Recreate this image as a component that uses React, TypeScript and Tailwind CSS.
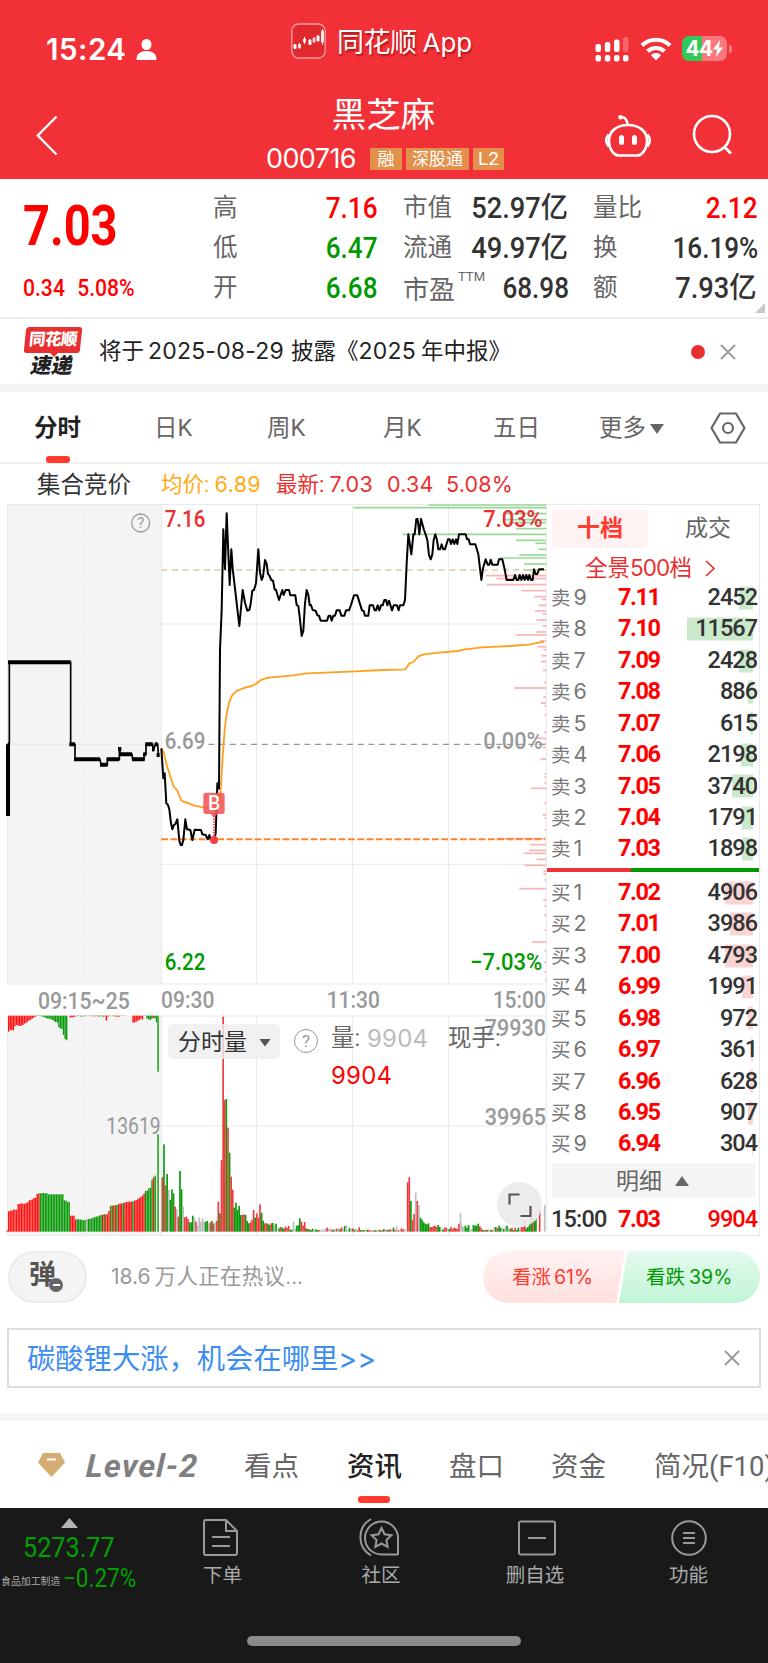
import { type FC, type ReactNode } from "react";

type Level = { label: string; price: string; volume: string; bar: number };

const sellLevels: Level[] = [
  { label: "9", price: "7.11", volume: "2452", bar: 14 },
  { label: "8", price: "7.10", volume: "11567", bar: 66 },
  { label: "7", price: "7.09", volume: "2428", bar: 14 },
  { label: "6", price: "7.08", volume: "886", bar: 5.5 },
  { label: "5", price: "7.07", volume: "615", bar: 3.5 },
  { label: "4", price: "7.06", volume: "2198", bar: 12.5 },
  { label: "3", price: "7.05", volume: "3740", bar: 21 },
  { label: "2", price: "7.04", volume: "1791", bar: 11 },
  { label: "1", price: "7.03", volume: "1898", bar: 11 },
];

const buyLevels: Level[] = [
  { label: "1", price: "7.02", volume: "4906", bar: 28 },
  { label: "2", price: "7.01", volume: "3986", bar: 23 },
  { label: "3", price: "7.00", volume: "4793", bar: 28 },
  { label: "4", price: "6.99", volume: "1991", bar: 11 },
  { label: "5", price: "6.98", volume: "972", bar: 5.5 },
  { label: "6", price: "6.97", volume: "361", bar: 2 },
  { label: "7", price: "6.96", volume: "628", bar: 3.5 },
  { label: "8", price: "6.95", volume: "907", bar: 5.5 },
  { label: "9", price: "6.94", volume: "304", bar: 1.5 },
];

// The chart is drawn in units of a third of a pixel.
const auctionLine =
  "24,948 24,733 28,733 28,487 212,487 212,733 225,733 225,778 300,778 303,794 322,794 322,778 358,778 358,747 362,763 396,763 398,778 432,778 432,763 438,763 438,733 458,733 460,748 467,733 473,733 475,763";

const priceLine =
  "484,745 490,835 494,820 499,910 504,915 508,928 513,970 517,988 521,976 526,972 532,958 538,1022 542,1035 546,1035 550,1020 556,958 561,988 571,990 577,1020 584,989 603,990 607,1003 617,1005 623,1018 628,1005 632,1018 643,1018 647,1000 652,850 657,866 660,450 665,330 670,88 675,208 680,40 689,255 694,148 698,205 718,378 728,270 735,308 742,332 748,330 752,312 757,272 762,270 768,250 775,148 780,218 785,240 789,230 795,180 800,192 804,222 808,226 814,240 819,242 824,268 828,270 837,300 847,270 851,285 857,270 867,270 871,286 886,286 890,315 895,318 899,350 905,408 910,392 915,310 920,270 925,285 929,315 933,315 938,330 947,332 952,346 957,347 962,362 981,362 986,347 991,347 995,362 1000,347 1005,347 1010,331 1019,331 1024,347 1033,347 1038,331 1047,331 1052,318 1062,286 1072,286 1086,331 1091,333 1095,347 1105,347 1109,316 1119,316 1124,331 1128,331 1133,316 1138,331 1143,316 1148,316 1153,300 1158,300 1162,316 1167,302 1176,331 1181,316 1191,316 1196,331 1200,316 1210,316 1215,300 1220,190 1225,103 1234,163 1240,103 1244,103 1249,57 1253,57 1258,103 1263,57 1272,90 1277,104 1282,120 1287,165 1292,178 1297,163 1301,120 1306,103 1311,120 1315,148 1320,148 1325,133 1330,148 1335,148 1344,118 1349,118 1353,132 1358,118 1363,132 1368,118 1372,132 1377,103 1397,103 1401,118 1406,118 1410,133 1426,133 1435,163 1440,205 1444,240 1449,205 1457,178 1463,194 1468,194 1472,179 1477,194 1493,194 1497,178 1507,178 1514,208 1520,240 1540,240 1545,225 1550,240 1555,240 1559,225 1564,240 1569,225 1574,240 1579,225 1584,240 1588,225 1593,240 1598,240 1602,208 1607,222 1612,222 1617,208 1632,208";

const averageLine =
  "485,745 492,760 500,795 510,825 520,858 532,872 543,900 552,906 565,909 580,916 600,920 620,924 650,924 658,905 663,860 668,770 674,690 680,640 688,605 697,585 712,572 735,563 755,558 768,552 780,541 800,534 815,532 880,526 920,520 1050,515 1150,510 1215,508 1220,503 1228,490 1240,486 1255,469 1272,463 1315,458 1375,453 1390,449 1445,442 1530,438 1585,434 1605,430 1632,425";

// [y, left edge] of each volume-at-price line, all of them end at x = 1638
const askDepth = [
  [15, 1285], [23, 1060], [41, 1509], [59, 1509], [68, 1525], [86, 1548], [103, 1208],
  [121, 1548], [130, 1606], [148, 1616], [165, 1558], [174, 1500], [192, 1572], [210, 1570],
];

const bidDepth = [
  [227, 1457], [236, 1490], [254, 1461], [272, 1564], [290, 1603], [298, 1625], [316, 1616],
  [333, 1605], [342, 1628], [360, 1609], [378, 1627], [396, 1609], [405, 1547], [423, 1620],
  [440, 1612], [449, 1630], [467, 1624], [485, 1623], [511, 1628], [547, 1633], [564, 1543],
  [591, 1630], [609, 1622], [617, 1633], [645, 1633], [697, 1632], [715, 1608], [733, 1624],
  [742, 1628], [777, 1621], [822, 1633], [831, 1633], [848, 1633], [865, 1592], [910, 1633],
  [945, 1628], [955, 1633], [990, 1633], [1016, 1488], [1034, 1590], [1051, 1588], [1060, 1573],
  [1078, 1610], [1096, 1573], [1114, 1630], [1122, 1630], [1140, 1633], [1166, 1558],
  [1200, 1630], [1218, 1632], [1246, 1632], [1290, 1633], [1326, 1596], [1352, 1633],
  [1387, 1632], [1415, 1633], [1440, 1635],
];

const barColors: Record<string, string> = { r: "#f03a3e", R: "#ff1414", g: "#0a9a0a", n: "#bdbdbd" };

type BarRun = [x: number, bars: string];

// Each token is a colour letter followed by the height of the bar.
const auctionTop: BarRun[] = [
  [26, "R48 R42 R44 R44 R32 R28 R30 R31 R30 R28 R24 R22 R18 R15 R12 R9 R5 R3 g1 g1 R1 g2 g3 g5 g7 g9 g9 g11 g13 g16 g19 g20 g35 g38 g40 g58 g70 g74"],
  [211, "R6 R5 R4 R3 n1 g1 g1 g3 n1 g2 g1 n1 g1 n1 R2 n1 g2 g1 R3 g1 g2 R3 R2 R15 R3 g1 n1 g1 R2 R2 R3 R3 n1 g1 n1 n1"],
  [399, "R21 R20 R18 R15 R13 R9 R12 n1 g1 g9 g11 g13 g9 R7 g8 g20"],
  [474, "g168"],
];

const auctionBottom: BarRun[] = [
  [21, "R4 R61 R63 R63 R66 R66 R66 R83 R83 R85 R84 R84 R86 R88 R94 R95 R97 R101 R102 R113 R115 g115 g116 g116 g115 g115 g112 g112 g112 g112 g112 g112 g112 g112 g112 g112 g94 g93 g89 g89 R48 R48 R48 R37 g37 g37 g36 g36 g34 g35 n37 g38 g38 g40 g42 g43 g45 g46 g48 g50 R51 g52 R52 R52 R62 g78 R78 g79 R79 g80 R83 R84 R85 g86 R88 R89 R90 R90 R90 g91 R93 R95 R97 R101 R104 R108 R115 g122 g123 g130 g132 g156 R163 g168"],
  [474, "g292"],
];

const volumeBars: BarRun[] = [
  [487, "r163 g262 r139 g173 n125 g95 g127 g115 r75 n68 r45 g182 g127 n75 r43 r45 r38 g28 g28 g48 n42 r30 n18 n42 n28 n40 n30 g30 g32 n25 r28 g32 r24 n28 r32"],
  [655, "r90 g55 r215 r645 r395 g398 r312 g237 r165 r126 g72 g87 g65 g77 g50 r50 r52 g50 g32 g25 r28 r35 r65 g42 r55 r42 r82 g57 g33 r25 r25 g24 g20 r25 g26 n20 g24"],
  [837, "g10 r14 g12 g9 r15 r11 r17 g6 g6 n30 n8 g18 g19 g40 r30 r18 r29 g10 r8 g7 g5 g9 n5 g7 g5 r5 n4 n8 n4 n10 r12 n9 n10 r6 g6 n8 r9 n11 g7 r13 n9 g17 n20 n5 g12 n8 r10 g6 n8 g4 r13 g5 r4 g5 n4 g6 r5 r4"],
  [1118, "r4 g3 g5 n4 r6 g4 r4 g8 n5 r5 g6 r7 n7 g12 r5 n16 r4 n6 r10 r7 n8"],
  [1223, "r148 r163 g92 r35 r53 n117 r92 n80 g42 g36 g28 g24 g22 g25 r14 r14 r16 r18 r14 g20 g14 n8 g6 r12 r12 n10 g8 r14 r8 r12 r10 r8 r24 n55 n18 n14 g18 g12 g20 n8 n6 g20 g18 g18 g24 r16 r10 g5 r4 g5 r6 n4 g6 r4 n14 g14 r10 g18 g12 n10 g8 n16 g18 n12 g8 r12 g5 r12 g5 g12 n10 r14 r14 r35 g10 g14 g22 g42 r42 g35 g40"],
  [1619, "r67"],
  [1634, "n80"],
];

const toBars = (runs: BarRun[], step: number) =>
  runs.flatMap(([start, bars]) =>
    bars.split(" ").map((token, index) => ({
      x: start + index * step,
      height: Number(token.slice(1)),
      fill: barColors[token[0]],
    })),
  );

type ChartLabelProps = {
  x: number;
  y: number;
  width: number;
  color: string;
  weight?: number;
  children: string;
};

const ChartLabel: FC<ChartLabelProps> = ({ x, y, width, color, weight = 500, children }) => (
  <text
    x={x}
    y={y}
    fill={color}
    fontSize="69"
    fontWeight={weight}
    lengthAdjust="spacingAndGlyphs"
    textLength={width}
  >
    {children}
  </text>
);

const Close: FC<{ className: string }> = ({ className }) => (
  <svg className={className} viewBox="0 0 16 16" fill="none" stroke="#999" strokeWidth="1.8">
    <path d="M1 1l14 14M15 1L1 15" />
  </svg>
);

const StatusBar: FC = () => (
  <div className="grid h-[86px] grid-cols-[291px_304px_1fr]">
    <div className="flex items-start pt-[35px] pl-[46px]">
      <span className="w-[81px] font-[Inter] text-[29.500px] leading-[29px] font-semibold tracking-[0.500px]">15:24</span>
      <svg className="mt-[4px] ml-[9px] h-[21px] w-[21px]" viewBox="0 0 21 21" fill="#fff">
        <ellipse cx="10.5" cy="5.5" rx="5" ry="5.5" />
        <path d="M0.5 20c0-5 4-8 10-8s10 3 10 8q0 1-1 1h-18q-1 0-1-1z" />
      </svg>
    </div>
    <div className="flex items-start pt-[23px]">
      <svg className="h-9 w-[35px]" viewBox="0 0 35 36" fill="none" stroke="#fff">
        <rect x="0.8" y="1" width="33.4" height="34" rx="7" fill="#e02a30" stroke="#f79a9d" strokeWidth="1.4" />
        <path d="M3 21.500h2v4h-2zM18 17h2v4.500h-2zM26 13h2v5h-2z" fill="#fff" />
        <path d="M8.500 20v6M7.500 21.500h2v3h-2zM13.500 14v7M12.500 16h2v3h-2zM19 16v6M23 14v6M22 15.500h2v3h-2zM27 12v6M31.500 6v16M30.500 8h2v11h-2z" strokeWidth="0.9" />
      </svg>
      <span className="ml-[11px] pt-[5px] text-[27px] leading-[30px] tracking-[-0.500px] [text-shadow:1px_2px_2px_rgba(120,0,0,0.6)]">
        同花顺<span className="ml-[6px] font-[Inter] text-[26px] tracking-normal">App</span>
      </span>
    </div>
    <div className="flex items-start">
      <svg className="mt-[37px] h-[25px] w-[34px]" viewBox="0 0 34 25" fill="#fff">
        <rect x="0.500" y="7" width="5.500" height="8" rx="2" />
        <rect x="9.800" y="5" width="5.500" height="10" rx="2" />
        <rect x="19" y="2.500" width="5.500" height="12.500" rx="2" />
        <rect x="28" y="0" width="5.500" height="15" rx="2" opacity="0.25" />
        <rect x="0.500" y="18" width="5.500" height="6.500" rx="2" />
        <rect x="9.800" y="18" width="5.500" height="6.500" rx="2" />
        <rect x="19" y="18" width="5.500" height="6.500" rx="2" />
        <rect x="28" y="18" width="5.500" height="6.500" rx="2" />
      </svg>
      <svg className="mt-[36px] ml-[11px] h-[25px] w-[32px]" viewBox="0 0 32 25" fill="none" stroke="#fff" strokeWidth="4">
        <path d="M2 9.500a20 20 0 0 1 28 0" />
        <path d="M7.500 15.300a12.300 12.300 0 0 1 17 0" />
        <path d="M10.800 19a7.500 7.500 0 0 1 10.400 0L16 24.500z" fill="#fff" stroke="none" />
      </svg>
      <div className="mt-[36px] ml-[10px] flex h-[25px] w-[45px] items-center justify-center rounded-[7px] bg-[linear-gradient(90deg,#34c759_44%,#f8797d_44%)] font-[Inter] text-[21px] leading-none font-bold tracking-[-0.8px]">
        44
        <svg className="ml-px h-[17px] w-[10px]" viewBox="0 0 10 17" fill="#fff">
          <path d="M7 0L0 9.500h4L3 17l7-9.500H6z" />
        </svg>
      </div>
      <div className="mt-[45px] ml-[2px] h-[8px] w-[2.500px] rounded-r-full bg-[#f8797d]" />
    </div>
  </div>
);

const TitleBar: FC = () => (
  <div className="grid h-[93px] grid-cols-[267px_240px_1fr]">
    <svg className="mt-[29px] ml-[36px] h-[41px] w-[22px]" viewBox="0 0 22 41" fill="none" stroke="#fff" strokeWidth="2.400">
      <path d="M20.500 1.500L1.800 20.500l18.700 19" />
    </svg>
    <div className="flex flex-col">
      <h1 className="mt-[11px] w-[233px] text-center text-[34.500px] leading-[36px]">黑芝麻</h1>
      <div className="mt-[13px] flex h-[26px] items-center">
        <span className="-ml-px w-[104px] pb-[2px] font-[Inter] text-[27px] leading-none tracking-[-0.600px]">000716</span>
        <div className="flex gap-[4px] text-[17px] leading-[22px]">
          <span className="w-[32px] bg-[#e2904a] text-center">融</span>
          <span className="w-[63px] bg-[#e2904a] text-center">深股通</span>
          <span className="w-[31px] bg-[#e2904a] text-center text-[19px]">L2</span>
        </div>
      </div>
    </div>
    <div className="flex">
      <svg className="mt-[28px] ml-[98px] h-[43px] w-[46px]" viewBox="0 0 46 43" fill="none" stroke="#fff" strokeWidth="2.600">
        <path d="M15.500 3.500c4-1 7 2 7 7.500" />
        <circle cx="15.500" cy="3.200" r="2.300" fill="#fff" stroke="none" />
        <path d="M23 11c11.500 0 19 6.500 19 15.500S37 41.500 32 41.500H14C9 41.500 4 35.500 4 26.500S11.500 11 23 11z" />
        <path d="M3.500 20.500q-4.500 5.500 0 12M42.500 20.500q4.500 5.500 0 12" />
        <path d="M16.500 23.500v5M29.500 23.500v5" strokeWidth="5" strokeLinecap="round" />
      </svg>
      <svg className="mt-[28px] ml-[41px] h-[42px] w-[42px]" viewBox="0 0 42 42" fill="none" stroke="#fff" strokeWidth="2.600">
        <circle cx="20" cy="20" r="18" />
        <path d="M32 32.500l7 7" strokeWidth="3" />
      </svg>
    </div>
  </div>
);

const Figure: FC<{ className?: string; children: ReactNode }> = ({ className = "text-[#333]", children }) => (
  <span className={`-mr-px ml-auto origin-right scale-x-90 text-[29px] leading-none font-medium ${className}`}>
    {children}
  </span>
);

const QuoteSummary: FC = () => (
  <section className="flex h-[140px] shrink-0 border-b-2 border-[#eeeeee]">
    <div className="w-[213px] pl-[23px] text-[#ff0000]">
      <div className="mt-[19px] h-[56px] origin-left scale-x-84 text-[56px] leading-[56px] font-bold">7.03</div>
      <div className="mt-[22px] flex origin-left scale-x-88 text-[24px] leading-[24px] font-medium">
        <span>0.34</span>
        <span className="ml-[14px]">5.08%</span>
      </div>
    </div>
    <div className="flex w-[164px] flex-col pt-[10px] text-[24.500px] text-[#666]">
      <div className="flex h-[39.700px] items-center">
        <span>高</span>
        <Figure className="text-[#ff0000]">7.16</Figure>
      </div>
      <div className="flex h-[39.700px] items-center">
        <span>低</span>
        <Figure className="text-[#009900]">6.47</Figure>
      </div>
      <div className="flex h-[39.700px] items-center">
        <span>开</span>
        <Figure className="text-[#009900]">6.68</Figure>
      </div>
    </div>
    <div className="ml-[26px] flex w-[165px] flex-col pt-[10px] text-[24.500px] text-[#666]">
      <div className="flex h-[39.700px] items-center">
        <span>市值</span>
        <span className="ml-auto origin-right scale-x-94 text-[29px] leading-none font-medium text-[#333]">52.97亿</span>
      </div>
      <div className="flex h-[39.700px] items-center">
        <span>流通</span>
        <span className="ml-auto origin-right scale-x-94 text-[29px] leading-none font-medium text-[#333]">49.97亿</span>
      </div>
      <div className="flex h-[39.700px] items-center">
        <span className="pt-[4px] text-[26px]">市盈</span>
        <span className="ml-[3px] self-start text-[13px] leading-[18px]">TTM</span>
        <Figure>68.98</Figure>
      </div>
    </div>
    <div className="ml-[25px] flex w-[164px] flex-col pt-[10px] text-[24.500px] text-[#666]">
      <div className="flex h-[39.700px] items-center">
        <span>量比</span>
        <Figure className="text-[#ff0000]">2.12</Figure>
      </div>
      <div className="flex h-[39.700px] items-center">
        <span>换</span>
        <Figure>16.19%</Figure>
      </div>
      <div className="flex h-[39.700px] items-center">
        <span>额</span>
        <span className="ml-auto origin-right scale-x-94 text-[29px] leading-none font-medium text-[#333]">7.93亿</span>
      </div>
    </div>
    <div className="mb-[4px] -ml-[2px] h-[10px] w-[10px] self-end bg-[#c8c8c8] [clip-path:polygon(100%_0,100%_100%,0_100%)]" />
  </section>
);

const NewsRow: FC = () => (
  <section className="flex h-[65px] shrink-0 items-center">
    <div className="ml-[25px] flex h-[49px] w-[58px] flex-col">
      <div className="h-[26px] w-[56px] -skew-x-6 rounded-[3px] bg-[#e93030] text-center text-[16.500px] leading-[25px] font-black tracking-[-0.5px] text-white">
        同花顺
      </div>
      <div className="h-[4px] w-[8px] self-center bg-[#e93030] [clip-path:polygon(0_0,100%_0,50%_100%)]" />
      <div className="ml-[6px] -skew-x-12 text-[21px] leading-[19px] font-black text-[#222]">速递</div>
    </div>
    <div className="ml-[16px] flex items-center text-[22.500px] leading-none text-[#222]">
      <span>将于</span>
      <span className="ml-[4px] w-[140px] font-[Inter] text-[23px] tracking-[0.200px]">2025-08-29</span>
      <span className="ml-[3px]">披露《</span>
      <span className="font-[Inter] text-[23px] tracking-[0.200px]">2025</span>
      <span className="ml-[5px]">年中报》</span>
    </div>
    <div className="ml-auto h-[14px] w-[14px] rounded-full bg-[#e93030]" />
    <Close className="mr-[32px] ml-[15px] h-4 w-4" />
  </section>
);

const ChartTabs: FC = () => (
  <nav className="flex h-[72px] shrink-0 items-center border-b-2 border-[#f0f0f0] pt-[4px] text-[23.500px] leading-none text-[#666]">
    <div className="relative ml-[34px] w-[120px] font-bold text-[#222]">
      分时
      <span className="absolute top-[39px] left-[12px] h-[7px] w-[24px] rounded-[3px] bg-[#ff3b30]" />
    </div>
    <span className="w-[113px]">日K</span>
    <span className="w-[116px]">周K</span>
    <span className="w-[110px]">月K</span>
    <span className="w-[106px]">五日</span>
    <span>更多</span>
    <span className="ml-[4px] h-[10px] w-[14px] bg-[#666] [clip-path:polygon(0_0,100%_0,50%_100%)]" />
    <svg className="mb-[2px] ml-[46px] h-[32px] w-[36px]" viewBox="0 0 36 32" fill="none" stroke="#666" strokeWidth="2.200">
      <path d="M10 1.500h16L34.500 16 26 30.500H10L1.500 16z" strokeLinejoin="round" />
      <circle cx="18" cy="16" r="5" />
    </svg>
  </nav>
);

const ChartLegend: FC = () => (
  <div className="flex h-[40px] shrink-0 items-center pt-px text-[21.500px] leading-none text-[#e93030]">
    <span className="ml-[37px] w-[124px] pt-[3px] text-[23.500px] text-[#333]">集合竞价</span>
    <span className="w-[115px] text-[#ffaa10]">
      均价: <span className="font-[Inter] text-[21.500px] tracking-[0.400px]">6.89</span>
    </span>
    <span className="w-[111px]">
      最新: <span className="font-[Inter] text-[21.500px] tracking-[0.400px]">7.03</span>
    </span>
    <span className="w-[59px] font-[Inter] text-[21.500px] tracking-[0.200px]">0.34</span>
    <span className="font-[Inter] text-[21.500px] tracking-[0.200px]">5.08%</span>
  </div>
);

const Chart: FC = () => (
  <div className="relative h-[736px] w-[547px] shrink-0">
    <svg className="block h-[736px] w-[547px]" viewBox="0 12 1641 2208" fontFamily="Roboto">
      <rect x="22" y="12" width="461" height="1440" fill="#f4f4f4" />
      <rect x="22" y="1548" width="461" height="658" fill="#f4f4f4" />
      <g stroke="#e9e9e9" strokeWidth="3" fill="none">
        <path d="M22 13.500H1641M22 1452H1641M484 372H1639M484 1093H1639M22 733H484" />
        <path d="M22 13V1452M484 13V1452M770 13V1452M1058 13V1452M1346 13V1452M1639 13V2208" />
        <path d="M22 1548H1639M22 2206H1641M484 1878H1639" />
        <path d="M22 1548V2206M484 1548V2206M770 1548V2206M1058 1548V2206M1346 1548V2206" />
        <path d="M22 373H484M22 1093H484M255 13V1452M255 1548V2206M22 1878H484" strokeDasharray="4 6" />
      </g>

      <g stroke="#98d898" strokeWidth="5">
        {askDepth.map(([y, x]) => (
          <path key={y} d={`M${x} ${y}H1638`} />
        ))}
      </g>
      <g stroke="#f9b4b4" strokeWidth="5">
        {bidDepth.map(([y, x]) => (
          <path key={y} d={`M${x} ${y}H1638`} />
        ))}
      </g>

      <ChartLabel x={494} y={81} width={122} color="#e93030">7.16</ChartLabel>
      <ChartLabel x={1450} y={81} width={178} color="#e93030">7.03%</ChartLabel>
      <ChartLabel x={494} y={746} width={122} color="#999">6.69</ChartLabel>
      <ChartLabel x={1450} y={746} width={178} color="#999">0.00%</ChartLabel>
      <ChartLabel x={494} y={1410} width={122} color="#009900">6.22</ChartLabel>
      <ChartLabel x={1410} y={1410} width={217} color="#009900">−7.03%</ChartLabel>
      <ChartLabel x={114} y={1527} width={275} color="#999">09:15~25</ChartLabel>
      <ChartLabel x={483} y={1523} width={160} color="#999">09:30</ChartLabel>
      <ChartLabel x={980} y={1523} width={160} color="#999">11:30</ChartLabel>
      <ChartLabel x={1478} y={1523} width={160} color="#999">15:00</ChartLabel>

      <path d="M484 210H1638" stroke="#e2c79e" strokeWidth="4" strokeDasharray="18 14" />
      <path d="M625 733H1638" stroke="#999" strokeWidth="4" strokeDasharray="18 14" />
      <path d="M484 1018H1635" stroke="#ff8526" strokeWidth="6" strokeDasharray="20 8" />
      <polyline points={auctionLine} fill="none" stroke="#000" strokeWidth="5" />
      <path
        d="M24 487H212M24 733H28M24 948V733M208 733H225M222 778H300M300 794H323M320 778H358M354 747H364M358 763H396M396 778H434M430 763H438M436 733H458M456 748H464M464 733H473M470 765H479"
        stroke="#000"
        strokeWidth="12"
        strokeLinecap="butt"
        fill="none"
      />
      <polyline points={averageLine} fill="none" stroke="#ffa01e" strokeWidth="5.500" strokeLinejoin="round" />
      <polyline points={priceLine} fill="none" stroke="#000" strokeWidth="6" strokeLinejoin="round" />

      <path d="M642 940V1010" stroke="#f25050" strokeWidth="7" strokeDasharray="4 4" />
      <path d="M618 878h48q8 0 8 8v48q0 8-8 8h-14l-10 12-10-12h-14q-8 0-8-8v-48q0-8 8-8z" fill="#f25555" opacity="0.88" />
      <circle cx="642" cy="1020" r="12" fill="#f24040" />
      <text x="642" y="931" fill="#fff" fontSize="58" fontWeight="500" textAnchor="middle">B</text>

      <circle cx="422" cy="69" r="27" fill="none" stroke="#999" strokeWidth="4" />
      <text x="422" y="85" fill="#999" fontSize="44" textAnchor="middle">?</text>

      {toBars(auctionTop, 4.7).map((bar) => (
        <rect key={bar.x} x={bar.x - 2} y="1547" width="4.200" height={bar.height} fill={bar.fill} />
      ))}
      {toBars(auctionBottom, 4.78).map((bar) => (
        <rect key={bar.x} x={bar.x - 2} y={2195 - bar.height} width="4.200" height={bar.height} fill={bar.fill} />
      ))}
      {toBars(volumeBars, 4.81).map((bar) => (
        <rect key={bar.x} x={bar.x - 2.5} y={2195 - bar.height} width="5" height={bar.height} fill={bar.fill} />
      ))}
      <ChartLabel x={319} y={1902} width={163} color="#999" weight={400}>13619</ChartLabel>
      <ChartLabel x={1454} y={1607} width={184} color="#999">79930</ChartLabel>
      <ChartLabel x={1454} y={1874} width={184} color="#999">39965</ChartLabel>
    </svg>

    <div className="absolute top-[520px] left-[168px] flex h-[35px] w-[112px] items-center rounded-[5px] bg-[#eeeeee]/80 pt-[2px] pl-[10px] text-[23px] leading-none text-[#333]">
      分时量
      <span className="ml-[12px] h-[8px] w-[12px] bg-[#555] [clip-path:polygon(0_0,100%_0,50%_100%)]" />
    </div>
    <div className="absolute top-[525px] left-[294px] flex h-[24px] w-[24px] items-center justify-center rounded-full border-[1.500px] border-[#999] text-[17px] leading-none text-[#999]">
      ?
    </div>
    <div className="absolute top-[516px] left-[331px] w-[180px] text-[23.500px] leading-[37px] text-[#666]">
      <div className="flex">
        <span className="w-[36px]">量:</span>
        <span className="w-[81px] font-[Inter] text-[24px] tracking-[0.200px] text-[#bbb]">9904</span>
        <span>现手:</span>
      </div>
      <div className="font-[Inter] text-[24px] tracking-[0.200px] text-[#ff0000]">9904</div>
    </div>
    <div className="absolute top-[678px] left-[497px] flex h-[45px] w-[45px] items-center justify-center rounded-full bg-[#eaeaea]/90">
      <svg className="h-[24px] w-[24px]" viewBox="0 0 24 24" fill="none" stroke="#555" strokeWidth="2.200">
        <path d="M1.500 11.500V1.500h10M22.500 13v10h-10" />
      </svg>
    </div>
  </div>
);

const LevelRow: FC<{ side: string; level: Level; barClass: string }> = ({ side, level, barClass }) => (
  <div className="flex h-[31.450px] items-center pr-[2px] leading-none">
    <span className="ml-[4px] w-[67px] text-[19.500px] text-[#777]">
      {side}
      <span className="ml-[3px] font-[Inter] text-[21.500px]">{level.label}</span>
    </span>
    <span className="text-[23.500px] font-bold tracking-[-1.400px] text-[#ff0000]">{level.price}</span>
    <span className="relative ml-auto text-[23.500px] font-medium tracking-[-1px] text-[#333]">
      <span
        className={`absolute top-1/2 right-[4px] h-[23px] -translate-y-1/2 ${barClass}`}
        style={{ width: level.bar }}
      />
      <span className="relative">{level.volume}</span>
    </span>
  </div>
);

const OrderBook: FC = () => (
  <aside className="h-[732px] w-[213px] border border-l-0 border-[#e9e9e9]">
    <div className="mt-[5px] ml-[5px] flex h-[38px] items-center text-center text-[23px]">
      <span className="w-[96px] shrink-0 rounded-[4px] bg-[#fff2f2] leading-[38px] font-bold text-[#ff3b30]">十档</span>
      <span className="w-[120px] shrink-0 text-[#666]">成交</span>
    </div>
    <div className="flex h-[38px] items-center pt-[3px] pl-[38px] text-[22.500px] leading-none text-[#e93030]">
      全景<span className="font-[Inter] text-[22.500px] tracking-[-0.900px]">500</span>档
      <svg className="ml-[13px] h-[17px] w-[10px] shrink-0" viewBox="0 0 10 17" fill="none" stroke="#e93030" strokeWidth="1.700">
        <path d="M1 1l8 7.500L1 16" />
      </svg>
    </div>
    <div className="-mt-[4px]">
      {sellLevels.map((level) => (
        <LevelRow key={level.price} side="卖" level={level} barClass="bg-[#cbe9cb]" />
      ))}
    </div>
    <div className="mt-[3px] flex h-[4px]">
      <div className="w-[84px] bg-[#f03338]" />
      <div className="flex-1 bg-[#009900]" />
    </div>
    <div className="mt-[5px]">
      {buyLevels.map((level) => (
        <LevelRow key={level.price} side="买" level={level} barClass="bg-[#fad4d5]" />
      ))}
    </div>
    <div className="mt-[3px] mr-[4px] ml-[5px] flex h-[35px] items-center bg-[#f4f4f4] pt-[3px] pl-[64px] text-[23px] leading-none text-[#666]">
      明细
      <span className="mb-[2px] ml-[13px] h-[10px] w-[14px] bg-[#666] [clip-path:polygon(50%_0,100%_100%,0_100%)]" />
    </div>
    <div className="mt-[6px] flex h-[32px] items-center pr-[2px] text-[23.500px] leading-none font-medium text-[#ff0000]">
      <span className="ml-[4px] w-[67px] tracking-[-0.800px] text-[#333]">15:00</span>
      <span className="font-bold tracking-[-1.400px]">7.03</span>
      <span className="ml-auto tracking-[-1px]">9904</span>
    </div>
  </aside>
);

const Discussion: FC = () => (
  <section className="flex h-[52px] shrink-0 items-center pr-[8px] pl-[8px]">
    <div className="relative flex h-[52px] w-[79px] items-center justify-center rounded-full border-2 border-[#ebebeb] bg-[#f4f4f4] pr-[10px] pb-[3px] text-[27px] leading-none font-bold text-[#555]">
      弹
      <span className="absolute top-[25px] left-[39px] flex h-[14px] w-[14px] items-center justify-center rounded-full bg-[#666]">
        <span className="h-[2px] w-[7px] bg-white" />
      </span>
    </div>
    <span className="ml-[24px] text-[22px] leading-none text-[#999]">
      <span className="font-[Inter] text-[21px]">18.6</span>
      <span className="ml-[4px] text-[21.500px] tracking-[0.300px]">万人正在热议...</span>
    </span>
    <div className="ml-auto flex h-[52px] w-[142px] items-center rounded-l-full rounded-r-[4px] bg-linear-to-b from-[#fff1f1] to-[#ffe1df] pt-px pl-[29px] text-[19.500px] leading-none text-[#ff3b30] [clip-path:polygon(0_0,100%_0,94%_100%,0_100%)]">
      看涨<span className="ml-[3px] font-[Inter] text-[19.500px]">61%</span>
    </div>
    <div className="-ml-[6px] flex h-[52px] w-[141px] items-center rounded-l-[4px] rounded-r-full bg-linear-to-b from-[#e4fbee] to-[#c0f4d6] pt-px pl-[27px] text-[19.500px] leading-none text-[#009900] [clip-path:polygon(6%_0,100%_0,100%_100%,0_100%)]">
      看跌<span className="ml-[4px] font-[Inter] text-[19.500px]">39%</span>
    </div>
  </section>
);

const sectionTabs = [
  { label: "看点", className: "w-[103px]" },
  { label: "资讯", className: "w-[102px] font-medium text-[#222]", active: true },
  { label: "盘口", className: "w-[102px]" },
  { label: "资金", className: "w-[103px]" },
  { label: "简况(F10)", className: "w-[130px]" },
];

const SectionTabs: FC = () => (
  <nav className="flex h-[87px] shrink-0 items-center overflow-hidden pt-[4px] text-[27.500px] leading-none text-[#666]">
    <svg className="mb-[4px] ml-[38px] h-[24px] w-[27px] shrink-0" viewBox="0 0 27 24">
      <path d="M5 0h17l5 9.500L13.500 24 0 9.500z" fill="#d3ac74" />
      <path d="M9 6.500h9" stroke="#fff" strokeWidth="2" />
    </svg>
    <span className="mb-[2px] ml-[21px] w-[158px] shrink-0 origin-left -skew-x-3 text-[32px] font-bold tracking-[1.200px] text-[#808080] italic">
      Level-2
    </span>
    {sectionTabs.map((tab) => (
      <div key={tab.label} className={`relative shrink-0 whitespace-nowrap ${tab.className}`}>
        {tab.label}
        {tab.active && <span className="absolute top-[43px] left-[11px] h-[7px] w-[32px] rounded-[3px] bg-[#ff3b30]" />}
      </div>
    ))}
  </nav>
);

const BottomBar: FC = () => (
  <footer className="flex h-[155px] shrink-0 flex-col bg-[#191919] text-[#aaa]">
    <div className="flex h-[128px] text-[19.500px] leading-none">
      <div className="w-[144px] text-[#00a000]">
        <div className="mt-[10px] ml-[61px] h-[10px] w-[17px] bg-[#b5b5b5] [clip-path:polygon(50%_0,100%_100%,0_100%)]" />
        <div className="mt-[6px] ml-[23px] origin-left scale-x-90 text-[28px] leading-[28px]">5273.77</div>
        <div className="mt-[3px] flex items-center whitespace-nowrap">
          <span className="w-[63px] pt-[6px] pl-px text-[9.900px] text-[#aaa]">食品加工制造</span>
          <span className="origin-left scale-x-90 text-[25px] leading-[28px]">−0.27%</span>
        </div>
      </div>
      <div className="flex w-[157px] flex-col items-center">
        <svg className="mt-[11px] mr-[4px] h-[37px] w-[35px]" viewBox="0 0 35 37" fill="none" stroke="#999" strokeWidth="2">
          <path d="M3 1h20l11 11v22q0 2-2 2H3q-2 0-2-2V3q0-2 2-2zM23 1v11h11M9 18h18M9 27h18" />
        </svg>
        <span className="mt-[10px]">下单</span>
      </div>
      <div className="flex w-[160px] flex-col items-center">
        <svg className="mt-[10px] mr-[5px] h-[39px] w-[41px]" viewBox="0 0 41 39" fill="none" stroke="#999" strokeWidth="2">
          <path d="M40 36V20a16.500 16.500 0 1 0-16.500 16.500H39q1 0 1-.5zM13 1a21 21 0 0 0 0 36.500" />
          <path d="M23.500 10l3 6.300 6.900.9-5 4.800 1.200 6.800-6.100-3.300-6.100 3.300 1.200-6.800-5-4.800 6.900-.9z" />
        </svg>
        <span className="mt-[9px]">社区</span>
      </div>
      <div className="flex w-[148px] flex-col items-center">
        <svg className="mt-[12px] ml-[3px] h-[36px] w-[38px]" viewBox="0 0 38 36" fill="none" stroke="#999" strokeWidth="2">
          <rect x="1" y="1.500" width="36" height="33" rx="2" />
          <path d="M10 18h18" />
        </svg>
        <span className="mt-[10px]">删自选</span>
      </div>
      <div className="flex w-[159px] flex-col items-center">
        <svg className="mt-[12px] h-[36px] w-[36px]" viewBox="0 0 36 36" fill="none" stroke="#999" strokeWidth="2">
          <circle cx="18" cy="18" r="16.800" />
          <path d="M12 13h12M12 18h12M12 23h12" />
        </svg>
        <span className="mt-[10px]">功能</span>
      </div>
    </div>
    <div className="ml-[247px] h-[10px] w-[274px] rounded-full bg-[#8b8b8b]" />
  </footer>
);

const App: FC = () => (
  <div className="flex h-[1663px] w-[768px] flex-col overflow-hidden bg-white font-['Roboto','Noto_Sans_CJK_SC',sans-serif]">
    <header className="h-[179px] shrink-0 bg-[#f23037] text-white">
      <StatusBar />
      <TitleBar />
    </header>
    <QuoteSummary />
    <NewsRow />
    <div className="h-[8px] shrink-0 bg-[#f4f4f4]" />
    <ChartTabs />
    <ChartLegend />
    <main className="flex h-[747px] shrink-0">
      <Chart />
      <OrderBook />
    </main>
    <Discussion />
    <section className="mx-[7px] mt-[25px] flex h-[60px] shrink-0 items-center justify-between border-2 border-[#dedede] pr-[19px] pl-[18px] text-[28.300px] leading-none text-[#3d8ef0]">
      <span className="pt-[3px]">
        碳酸锂大涨，机会在哪里<span className="font-[Inter] text-[28.500px]">&gt;&gt;</span>
      </span>
      <Close className="h-4 w-4" />
    </section>
    <div className="mt-[25px] h-[8px] shrink-0 bg-[#f4f4f4]" />
    <SectionTabs />
    <BottomBar />
  </div>
);

export default App;
